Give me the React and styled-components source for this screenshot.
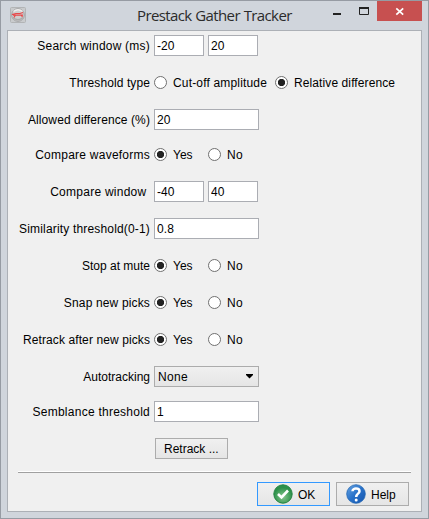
import React from "react";
import styled, { createGlobalStyle } from "styled-components";

const Global = createGlobalStyle`
  * { box-sizing: border-box; }
  body { margin: 0; overflow: hidden; }
`;

const Window = styled.main`
  width: 429px;
  height: 519px;
  border: 1px solid #969ba3;
  background: #d0d5dc;
  font: 12px/15px Arial, "Liberation Sans", sans-serif;
  color: #000;
  padding: 0 6px 6px;
  display: flex;
  flex-direction: column;
`;

const TitleBar = styled.header`
  height: 29px;
  flex: none;
  display: grid;
  grid-template-columns: 126px 1fr auto;
  align-items: start;
`;

const AppIcon = styled.svg`
  width: 16px;
  height: 16px;
  margin: 6px 0 0 3px;
`;

const Title = styled.h1`
  margin: 3px 0 0 4px;
  font: 15px/22px "Open Sans", sans-serif;
  letter-spacing: -0.62px;
  word-spacing: 0.5px;
  color: #2b2b2b;
  white-space: nowrap;
`;

const Controls = styled.div`
  display: flex;
  height: 20px;
`;

const Control = styled.button`
  width: ${(p) => p.$width}px;
  height: 20px;
  border: 0;
  padding: 0;
  background: ${(p) => (p.$close ? "#c75050" : "transparent")};
  svg { display: block; }
`;

const Panel = styled.section`
  flex: 1;
  border: 1px solid #acb0b6;
  background: #f0f0f0;
  padding-top: 4px;
  display: flex;
  flex-direction: column;
`;

const Row = styled.div`
  height: 21px;
  flex: none;
  margin-bottom: ${(p) => p.$gap ?? 16}px;
  display: grid;
  grid-template-columns: 142px 1fr;
  column-gap: 4px;
  align-items: center;
`;

const Label = styled.span`
  padding-top: 2px;
  text-align: right;
  white-space: pre;
  letter-spacing: ${(p) => p.$tracking ?? 0}px;
`;

const Caption = styled.span`
  padding-top: 2px;
`;

const Fields = styled.div`
  display: flex;
  align-items: center;
  gap: 4px;
`;

const Input = styled.input`
  width: ${(p) => (p.$wide ? 105 : 50)}px;
  height: 21px;
  border: 1px solid #abadb3;
  border-radius: 0;
  background: #fff;
  padding: 0 2px;
  font: inherit;
  letter-spacing: 0.1px;
  color: #000;
  outline: 0;
`;

const Option = styled.span`
  display: flex;
  align-items: center;
  gap: 6px;
  width: ${(p) => p.$width}px;
  white-space: nowrap;
  letter-spacing: ${(p) => p.$tracking ?? 0}px;
`;

const Dot = styled.span`
  width: 13px;
  height: 13px;
  flex: none;
  border: 1px solid #707070;
  border-radius: 50%;
  background: ${(p) =>
    p.$on ? "radial-gradient(circle, #222 3.3px, #fff 4px)" : "#fff"};
`;

const Select = styled.button`
  width: 105px;
  height: 21px;
  border: 1px solid #acacac;
  background: linear-gradient(#f0f0f0, #e5e5e5);
  padding: 0 4px 0 3px;
  font: inherit;
  letter-spacing: 0.3px;
  color: #000;
  display: flex;
  align-items: center;
  justify-content: space-between;
`;

const Button = styled.button`
  width: 73px;
  height: ${(p) => p.$height ?? 24}px;
  border: 1px solid ${(p) => (p.$primary ? "#3399ff" : "#acacac")};
  background: linear-gradient(#f0f0f0, #e5e5e5);
  margin-left: ${(p) => p.$offset ?? 0}px;
  padding: 0 0 0 ${(p) => p.$pad}px;
  font: inherit;
  color: #000;
  display: flex;
  align-items: center;
  gap: 5px;
  white-space: nowrap;
`;

const Rule = styled.div`
  width: 393px;
  height: 2px;
  margin: -4px 0 0 10px;
  border-top: 1px solid #fff;
  border-bottom: 1px solid #a0a0a0;
`;

const Footer = styled.footer`
  display: flex;
  justify-content: flex-end;
  gap: 6px;
  padding: 9px 12px 0 0;
`;

function Radio({ label, on, width, tracking }) {
  return (
    <Option $width={width} $tracking={tracking}>
      <Dot $on={on} />
      <Caption>{label}</Caption>
    </Option>
  );
}

function YesNo({ label, tracking }) {
  return (
    <Row>
      <Label $tracking={tracking}>{label}</Label>
      <Fields>
        <Radio label="Yes" on width={50} />
        <Radio label="No" tracking={0.3} />
      </Fields>
    </Row>
  );
}

function TextRow({ label, values, tracking, gap }) {
  return (
    <Row $gap={gap}>
      <Label $tracking={tracking}>{label}</Label>
      <Fields>
        {values.map((v) => (
          <Input key={v} defaultValue={v} $wide={values.length === 1} />
        ))}
      </Fields>
    </Row>
  );
}

export default function App() {
  return (
    <>
      <Global />
      <Window>
        <TitleBar>
          <AppIcon viewBox="0 0 16 16">
            <rect x=".5" y=".5" width="15" height="15" rx="1" fill="#c9cbcd" stroke="#b2b4b6" />
            <circle cx="8" cy="8" r="6.3" fill="#cfcfcf" stroke="#a2a2a4" />
            <path d="M3.5 4.5Q8 1 12.5 4.5" fill="none" stroke="#eee" strokeWidth="1.5" />
            <path d="M3 10.5Q8 15 13 10.5" fill="none" stroke="#aaa" strokeWidth="1.5" />
            <path d="M2 7.5L6 6.5H10L13 5.5M3 8.2H13M5.5 8L4 10.5M11 8L12.5 10" fill="none" stroke="#e8484a" strokeWidth="1.2" />
          </AppIcon>
          <Title>Prestack Gather Tracker</Title>
          <Controls>
            <Control $width={30} aria-label="Minimize">
              <svg width="30" height="20"><rect x="7" y="12" width="8" height="2" fill="#222" /></svg>
            </Control>
            <Control $width={21} aria-label="Maximize">
              <svg width="21" height="20"><path d="M3.5 6V13.5H12.5V6" fill="none" stroke="#222" /><path d="M3 7H13" stroke="#222" strokeWidth="2" /></svg>
            </Control>
            <Control $width={45} $close aria-label="Close">
              <svg width="45" height="20"><path d="M19.3 7.3L26.2 13.7M26.2 7.3L19.3 13.7" stroke="#fff" strokeWidth="1.7" /></svg>
            </Control>
          </Controls>
        </TitleBar>
        <Panel>
          <TextRow label="Search window (ms)" values={["-20", "20"]} tracking={0.22} />
          <Row>
            <Label $tracking={0.1}>Threshold type</Label>
            <Fields>
              <Radio label="Cut-off amplitude" on={false} width={117} tracking={0.17} />
              <Radio label="Relative difference" on tracking={0.1} />
            </Fields>
          </Row>
          <TextRow label="Allowed difference (%)" values={["20"]} gap={14} tracking={0.1} />
          <YesNo label="Compare waveforms" tracking={0.24} />
          <TextRow label="Compare window " values={["-40", "40"]} tracking={0.25} />
          <TextRow label="Similarity threshold(0-1)" values={["0.8"]} tracking={0.17} />
          <YesNo label="Stop at mute" />
          <YesNo label="Snap new picks" tracking={0.15} />
          <YesNo label="Retrack after new picks" tracking={0.1} />
          <Row $gap={14}>
            <Label>Autotracking</Label>
            <Select>
              <Caption>None</Caption>
              <svg width="9" height="5"><path d="M1 0H8V1L4.5 4.5L1 1Z" fill="#000" /></svg>
            </Select>
          </Row>
          <TextRow label="Semblance threshold" values={["1"]} tracking={0.25} />
          <Row>
            <Label />
            <Button $height={21} $offset={1} $pad={8}><Caption>Retrack ...</Caption></Button>
          </Row>
          <Rule />
          <Footer>
            <Button $primary $pad={15}>
              <svg width="20" height="20" viewBox="0 0 20 20">
                <defs><radialGradient id="green" cy=".65"><stop stopColor="#87c58e" /><stop offset="1" stopColor="#2c9149" /></radialGradient></defs>
                <circle cx="10" cy="10" r="9.2" fill="url(#green)" stroke="#258443" />
                <path d="M5 10L8.5 13.5L15 6.5" fill="none" stroke="#fff" strokeWidth="2.6" />
              </svg>
              <Caption>OK</Caption>
            </Button>
            <Button $pad={9}>
              <svg width="20" height="20" viewBox="0 0 20 20">
                <defs><linearGradient id="blue" x2="1" y2="1"><stop stopColor="#69a5e3" /><stop offset=".5" stopColor="#2871c9" /><stop offset="1" stopColor="#1555ad" /></linearGradient></defs>
                <circle cx="10" cy="10" r="9.3" fill="url(#blue)" stroke="#2468b4" strokeWidth=".8" />
                <path d="M6.5 7.2C6.5 3.6 13.5 3.6 13.5 7.2C13.5 9.8 10.2 9.6 10.2 13" fill="none" stroke="#fff" strokeWidth="2.5" />
                <circle cx="10.2" cy="16" r="1.5" fill="#fff" />
              </svg>
              <Caption>Help</Caption>
            </Button>
          </Footer>
        </Panel>
      </Window>
    </>
  );
}
